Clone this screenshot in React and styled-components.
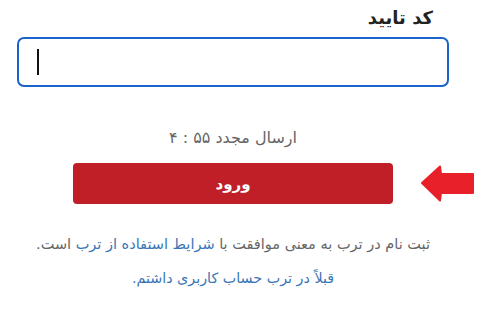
import React from "react";
import styled, { createGlobalStyle } from "styled-components";

const GlobalStyle = createGlobalStyle`
  html, body {
    margin: 0;
    padding: 0;
    background: #ffffff;
  }
  body {
    font-family: "DejaVu Sans", "Noto Sans", sans-serif;
  }
`;

const Page = styled.div`
  width: 432px;
  margin-left: 17px;
  padding-top: 5px;
  direction: rtl;
  display: flex;
  flex-direction: column;
`;

const Label = styled.div`
  font-size: 18px;
  font-weight: bold;
  color: #222;
  padding-right: 16px;
  height: 26px;
  line-height: 26px;
  margin-bottom: 6px;
`;

const InputBox = styled.div`
  box-sizing: border-box;
  height: 50px;
  border: 2px solid #1b62c9;
  border-radius: 7px;
  direction: ltr;
  display: flex;
  align-items: center;
  padding-left: 18px;
`;

const Caret = styled.span`
  width: 2px;
  height: 26px;
  background: #111;
`;

const Timer = styled.div`
  margin-top: 40px;
  text-align: center;
  font-size: 16px;
  color: #666;
  line-height: 22px;
`;

const ButtonRow = styled.div`
  position: relative;
  display: flex;
  justify-content: center;
  margin-top: 14px;
`;

const SubmitButton = styled.button`
  width: 320px;
  height: 41px;
  border: none;
  border-radius: 4px;
  background: #c01f28;
  color: #fff;
  font-family: inherit;
  font-size: 15px;
  font-weight: bold;
  cursor: pointer;
`;

const Arrow = styled.svg`
  position: absolute;
  left: 404px;
  top: 2px;
`;

const Terms = styled.p`
  margin: 29px 0 0;
  text-align: center;
  font-size: 14.5px;
  color: #666;
  line-height: 22px;
`;

const Link = styled.a`
  color: #3a75b5;
  text-decoration: none;
`;

const LoginLink = styled(Link)`
  display: block;
  text-align: center;
  font-size: 14.3px;
  line-height: 22px;
  margin-top: 12px;
`;

export default function App() {
  return (
    <>
      <GlobalStyle />
      <Page>
        <Label>کد تایید</Label>
        <InputBox>
          <Caret />
        </InputBox>
        <Timer>ارسال مجدد ۵۵ : ۴</Timer>
        <ButtonRow>
          <SubmitButton>ورود</SubmitButton>
          <Arrow width="54" height="38" viewBox="0 0 54 38">
            <path
              d="M1 18 L19 1.5 L20 9 L52 9 L52 28 L20 28 L19 35.5 Z"
              fill="#e8202a"
              stroke="#e8202a"
              strokeWidth="2"
              strokeLinejoin="round"
            />
          </Arrow>
        </ButtonRow>
        <Terms>
          ثبت نام در ترب به معنی موافقت با{" "}
          <Link href="#">شرایط استفاده از ترب</Link> است.
        </Terms>
        <LoginLink href="#">قبلاً در ترب حساب کاربری داشتم.</LoginLink>
      </Page>
    </>
  );
}
